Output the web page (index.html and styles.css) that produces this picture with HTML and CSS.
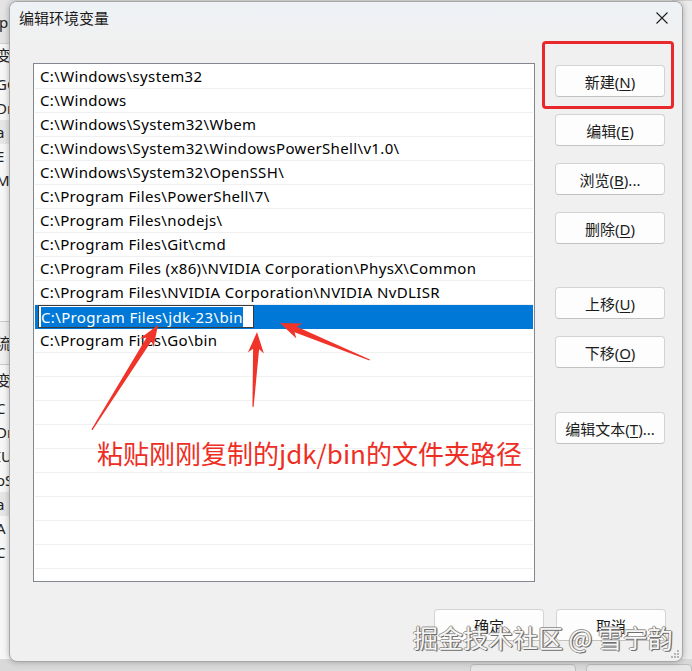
FILE: index.html
```html
<!DOCTYPE html>
<html lang="zh-CN">
<head>
<meta charset="utf-8">
<title>编辑环境变量</title>
<link rel="stylesheet" href="styles.css">
</head>
<body>
<div class="desktop">
  <div class="back back-left">
    <div class="bl-top">op</div>
    <div class="bl-row r1">变</div>
    <div class="bl-row">GC</div>
    <div class="bl-row">Dr</div>
    <div class="bl-row shade">a</div>
    <div class="bl-row">E</div>
    <div class="bl-row">M</div>
    <div class="bl-sep"></div>
    <div class="bl-row r2">流</div>
    <div class="bl-row r3">变</div>
    <div class="bl-row">C</div>
    <div class="bl-row">Dr</div>
    <div class="bl-row">IU</div>
    <div class="bl-row">oS</div>
    <div class="bl-row shade">a</div>
    <div class="bl-row">A</div>
    <div class="bl-row">C</div>
  </div>
  <div class="back back-right"></div>
  <div class="back back-bottom"><span class="bb-btn"></span><span class="bb-btn"></span></div>

  <div class="dialog">
    <div class="titlebar">
      <span class="title">编辑环境变量</span>
      <svg class="close" width="12" height="12" viewBox="0 0 12 12"><path d="M0.5 0.5 L11.5 11.5 M11.5 0.5 L0.5 11.5" stroke="#1f1f1f" stroke-width="1.1" fill="none"/></svg>
    </div>
    <div class="body">
      <div class="list">
        <div class="row">C:\Windows\system32</div>
        <div class="row">C:\Windows</div>
        <div class="row">C:\Windows\System32\Wbem</div>
        <div class="row">C:\Windows\System32\WindowsPowerShell\v1.0\</div>
        <div class="row">C:\Windows\System32\OpenSSH\</div>
        <div class="row">C:\Program Files\PowerShell\7\</div>
        <div class="row">C:\Program Files\nodejs\</div>
        <div class="row">C:\Program Files\Git\cmd</div>
        <div class="row">C:\Program Files (x86)\NVIDIA Corporation\PhysX\Common</div>
        <div class="row">C:\Program Files\NVIDIA Corporation\NVIDIA NvDLISR</div>
        <div class="row selected"><span class="editbox"><span class="sel">C:\Program Files\jdk-23\bin</span></span></div>
        <div class="row">C:\Program Files\Go\bin</div>
        <div class="row"></div>
        <div class="row"></div>
        <div class="row"></div>
        <div class="row"></div>
        <div class="row"></div>
        <div class="row"></div>
        <div class="row"></div>
        <div class="row"></div>
        <div class="row"></div>
        <div class="row"></div>
      </div>
      <div class="side">
        <button class="btn b-new">新建(<u>N</u>)</button>
        <button class="btn b-s">编辑(<u>E</u>)</button>
        <button class="btn b-s">浏览(<u>B</u>)...</button>
        <button class="btn b-s">删除(<u>D</u>)</button>
        <button class="btn b-l">上移(<u>U</u>)</button>
        <button class="btn b-s">下移(<u>O</u>)</button>
        <button class="btn b-l2">编辑文本(<u>T</u>)...</button>
      </div>
    </div>
    <div class="footer">
      <button class="btn">确定</button>
      <button class="btn">取消</button>
    </div>
    <svg class="grip" width="8" height="8" viewBox="0 0 8 8"><g fill="#b5b5b5"><rect x="6" y="0" width="2" height="2"/><rect x="3" y="3" width="2" height="2"/><rect x="6" y="3" width="2" height="2"/><rect x="0" y="6" width="2" height="2"/><rect x="3" y="6" width="2" height="2"/><rect x="6" y="6" width="2" height="2"/></g></svg>
  </div>

  <div class="callout-box"></div>
  <svg class="arrows" width="692" height="671" viewBox="0 0 692 671">
    <g fill="#f0342a">
      <polygon transform="translate(158,325) rotate(32.2)" points="0,0 8,21 3,17 0.6,124 -0.6,124 -3,17 -8,21"/>
      <polygon transform="translate(257,332) rotate(3.05)" points="0,0 8,21 3,17 0.6,75 -0.6,75 -3,17 -8,21"/>
      <polygon transform="translate(280,323) rotate(-67.6)" points="0,0 8,21 3,17 0.6,97 -0.6,97 -3,17 -8,21"/>
    </g>
  </svg>
  <div class="note">粘贴刚刚复制的jdk/bin的文件夹路径</div>
  <div class="watermark">掘金技术社区 @ 雪宁韵</div>
</div>
</body>
</html>
```
FILE: styles.css
```css
* { box-sizing: border-box; }
html, body { margin: 0; padding: 0; }
body {
  background: #dcdcdc;
  font-family: "Noto Sans", "Noto Sans CJK SC", sans-serif;
  font-size: 14px;
  color: #000;
}
.desktop {
  position: relative;
  width: 692px;
  height: 671px;
  overflow: hidden;
  background: #e2e2e2;
}

/* windows behind the dialog */
.back { position: absolute; }
.back-left {
  left: 0; top: 0; width: 30px; height: 671px;
  background: #f7f7f7;
  display: flex; flex-direction: column; align-items: stretch;
  font-size: 15px; color: #222;
}
.bl-top {
  height: 44px; flex: none; background: #e4e4e4; border-bottom: 1px solid #cfcfcf;
  padding: 12px 0 0 0; margin-left: -10px; font-size: 15px; line-height: 20px;
}
.bl-row { height: 24px; flex: none; line-height: 24px; margin-left: -4px; white-space: nowrap; }
.bl-row.r1 { height: 28px; line-height: 22px; }
.bl-row.shade { background: #e6e6e6; }
.bl-sep { height: 130px; flex: none; border-bottom: 1px solid #c9c9c9; }
.bl-row.r2 { height: 43px; line-height: 43px; border-bottom: 1px solid #c9c9c9; background: #f0f0f0; }
.bl-row.r3 { height: 31px; line-height: 31px; }
.back-right {
  right: 0; top: 0; width: 20px; height: 671px;
  background: #ececec;
  border-top: 1px solid #d0d0d0;
}
.back-bottom {
  left: 0; bottom: 0; width: 692px; height: 12px;
  background: #d9d9d9;
  display: flex; gap: 10px; padding-left: 470px; padding-top: 5px;
}
.bb-btn { width: 130px; height: 20px; border: 1px solid #bdbdbd; border-radius: 4px; background: #e6e6e6; }

/* dialog */
.dialog {
  position: absolute;
  left: 9px; top: 1px;
  width: 674px; height: 661px;
  background: #f0f0f0;
  border: 1px solid #a7a7a7;
  border-radius: 8px;
  box-shadow: 0 0 6px rgba(0,0,0,0.28);
  overflow: hidden;
  display: flex; flex-direction: column;
}
.titlebar {
  height: 40px;
  flex: none;
  display: flex; align-items: flex-start;
  padding: 6px 14px 0 9px;
  background: linear-gradient(#eef2f6, #f0f0f0);
}
.title {
  font-family: "Noto Sans CJK SC", sans-serif;
  font-size: 15px; line-height: 20px; color: #1a1a1a;
}
.close { margin-left: auto; margin-top: 4px; }

.body {
  display: flex;
  padding: 21px 17px 0 23px;
}
.list {
  width: 502px; height: 519px;
  flex: none;
  background: #fff;
  border: 1px solid #828790;
  padding-top: 1px;
  overflow: hidden;
}
.row {
  height: 24px;
  margin: 0 1px;
  padding-left: 5px;
  border-bottom: 1px solid #f0f0f0;
  font-size: 15px;
  letter-spacing: 0.35px;
  line-height: 23px;
  white-space: nowrap;
  color: #000;
}
.row.selected {
  background: #0078d7;
  border-bottom-color: #0078d7;
  padding-left: 3px;
}
.editbox {
  display: inline-block;
  height: 23px;
  border: 1px solid #3a3a3a;
  background: #fff;
  padding: 1px 10px 0 2px;
  line-height: 19px;
  vertical-align: top;
}
.sel { display: inline-block; background: #0078d7; color: #fff; line-height: 20px; }

.side {
  margin-left: 20px;
  width: 110px;
  display: flex; flex-direction: column;
}
.btn {
  width: 110px; height: 32px;
  background: #fdfdfd;
  border: 1px solid #d3d3d3;
  border-bottom-color: #c2c2c2;
  border-radius: 4px;
  font-family: "Noto Sans", "Noto Sans CJK SC", sans-serif;
  font-size: 15px;
  color: #1b1b1b;
  padding: 0;
}
.btn u { text-underline-offset: 2px; }
.b-new { margin-top: 2px; }
.b-s { margin-top: 17px; }
.b-l { margin-top: 43px; }
.b-l2 { margin-top: 44px; }

.footer {
  display: flex; justify-content: flex-end; gap: 12px;
  padding: 27px 16px 0 0;
}
.grip { position: absolute; right: 3px; bottom: 3px; }

/* annotations */
.callout-box {
  position: absolute;
  left: 542px; top: 41px;
  width: 132px; height: 68px;
  border: 3px solid #e8282a;
  border-radius: 4px;
}
.arrows { position: absolute; left: 0; top: 0; pointer-events: none; }
.note {
  position: absolute;
  left: 97px; top: 438px;
  font-family: "Noto Sans CJK SC", sans-serif;
  font-size: 26px; line-height: 30px;
  color: #ee2e24;
  white-space: nowrap;
}
.watermark {
  position: absolute;
  left: 413px; top: 622px;
  font-family: "Noto Sans CJK SC", sans-serif;
  font-size: 25px; line-height: 30px;
  color: #f6f6f6;
  text-shadow: 1px 1px 0 #6e6e6e, -1px 0 0 #9a9a9a, 0 -1px 0 #9a9a9a, 1px 0 1px #555;
  white-space: nowrap;
}
```
